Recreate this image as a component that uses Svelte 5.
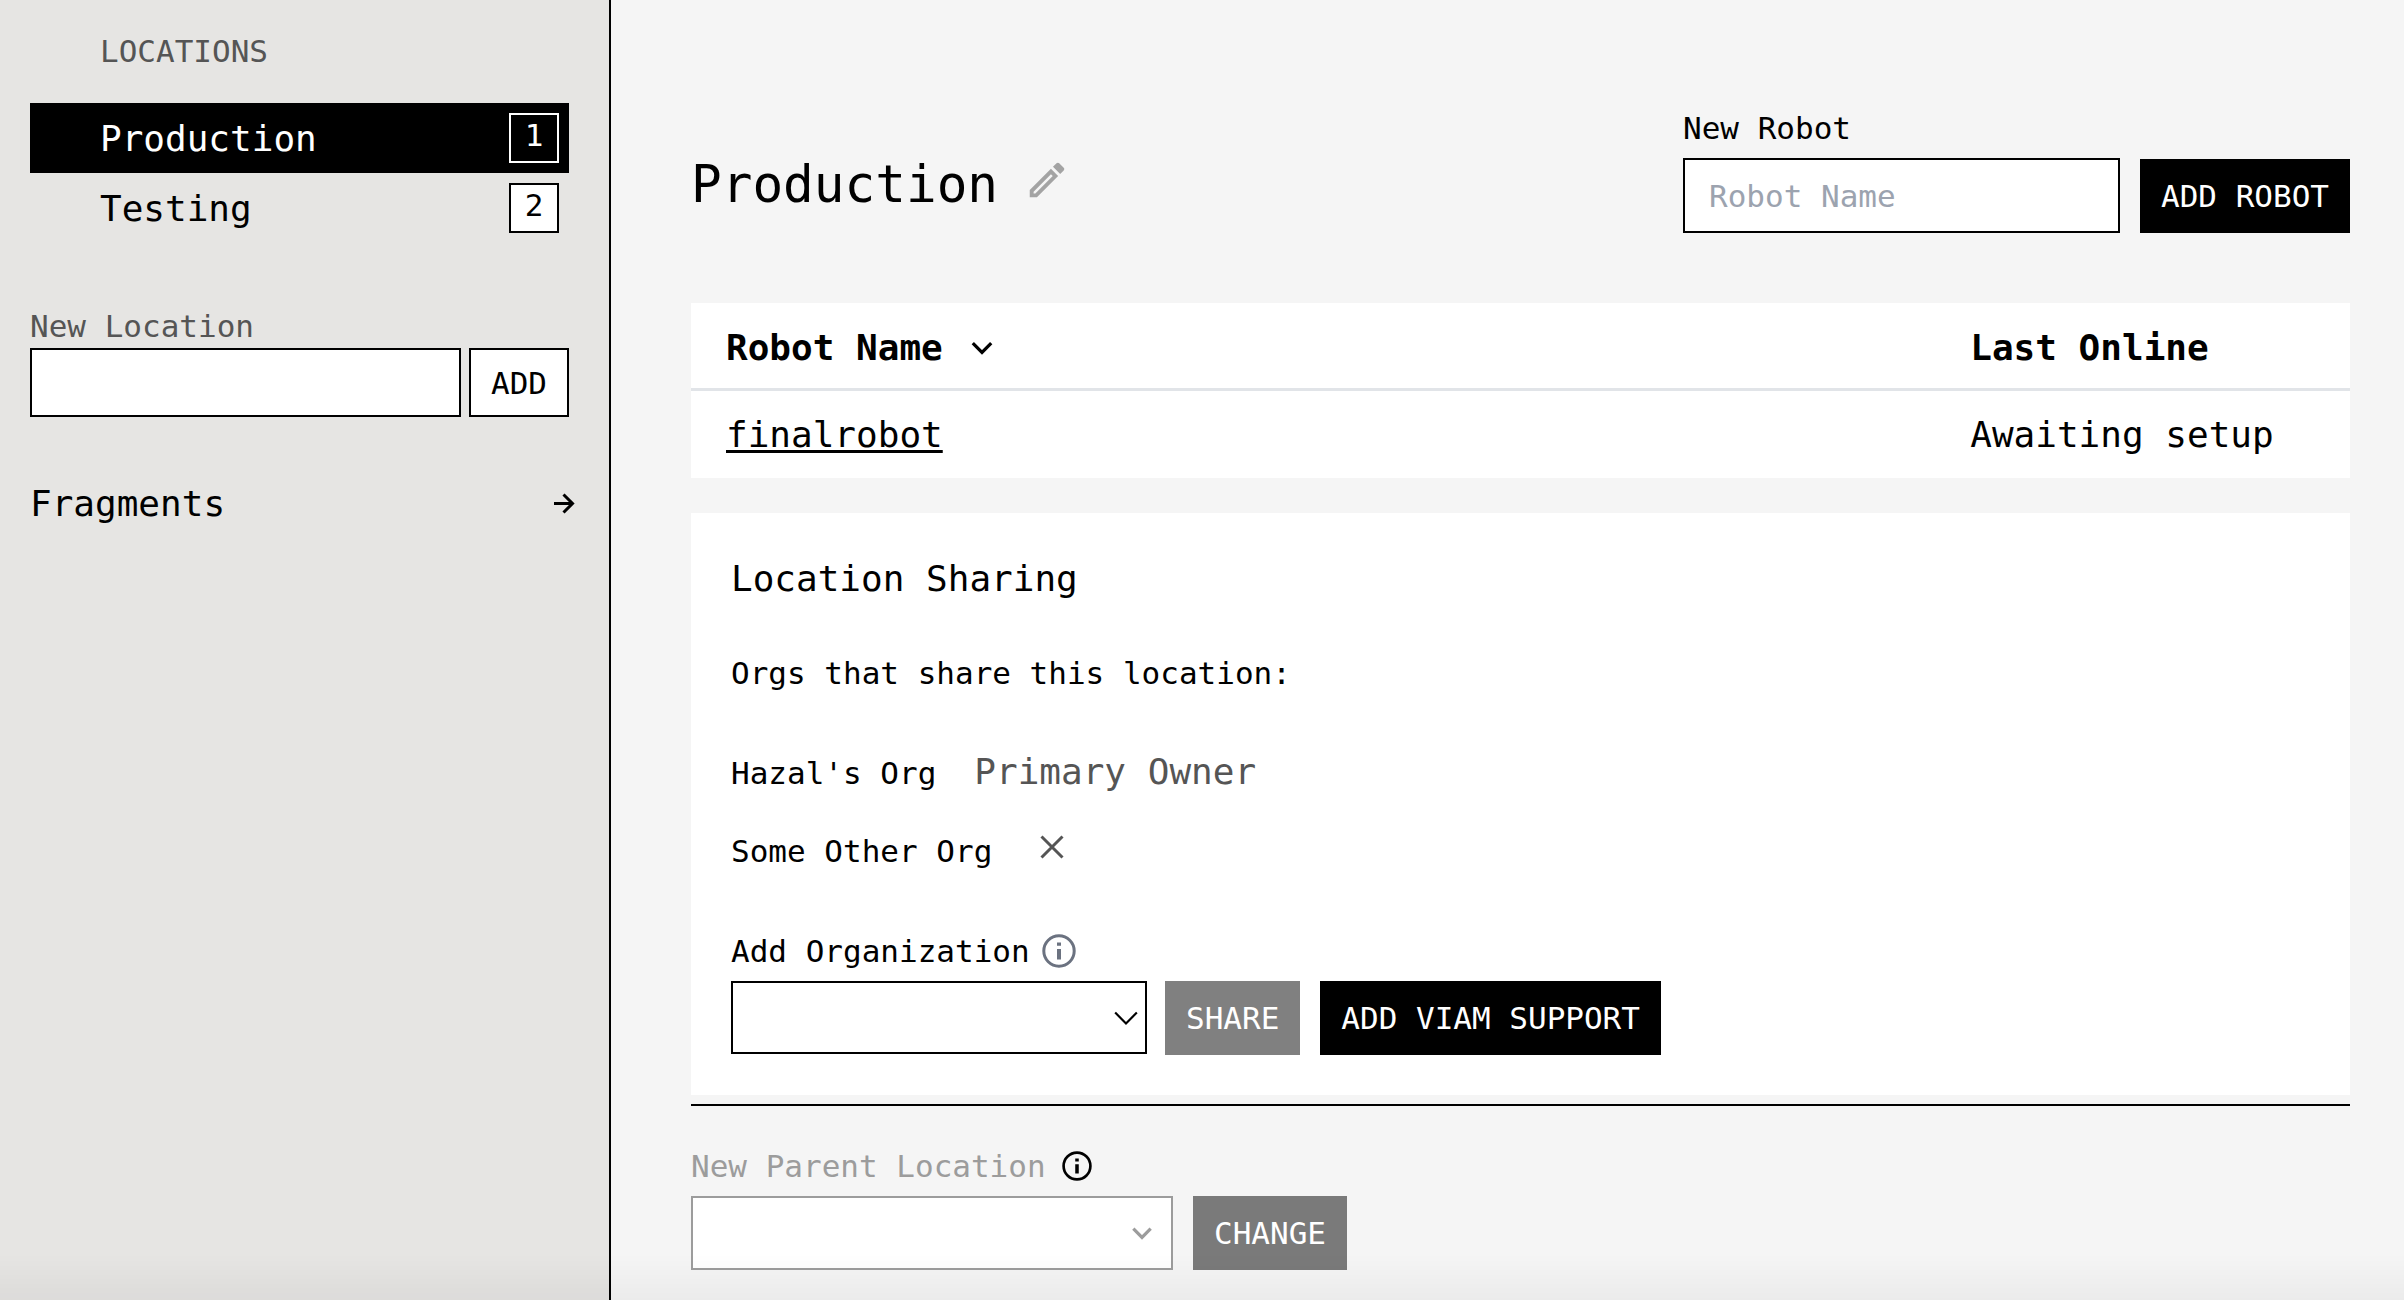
<script>
  const locations = [
    { name: 'Production', count: 1, active: true },
    { name: 'Testing', count: 2, active: false }
  ];
  const robots = [{ name: 'finalrobot', status: 'Awaiting setup' }];
</script>

<div class="page">
  <aside class="sidebar">
    <nav aria-label="Locations">
      <h2 class="nav-title">LOCATIONS</h2>
      <ul class="locations">
        {#each locations as location}
          <li>
            <a class="location" class:active={location.active} href="#{location.name.toLowerCase()}">
              <span>{location.name}</span>
              <span class="badge">{location.count}</span>
            </a>
          </li>
        {/each}
      </ul>
    </nav>

    <form class="new-location">
      <label for="new-location">New Location</label>
      <div class="add-row">
        <input id="new-location" type="text" />
        <button class="button light" type="button">ADD</button>
      </div>
    </form>

    <a class="fragments" href="#fragments">
      <span>Fragments</span>
      <svg class="arrow" viewBox="0 0 30 30" aria-hidden="true">
        <path d="M5 14.5H24M14.5 5.5L23.5 14.5L14.5 23.5" />
      </svg>
    </a>
  </aside>

  <main>
    <header>
      <div class="title">
        <h1>Production</h1>
        <button class="icon-button" type="button" aria-label="Rename location">
          <svg class="pencil" viewBox="0 0 24 24" aria-hidden="true">
            <path d="M14.06,9L15,9.94L5.92,19H5V18.08L14.06,9M17.66,3C17.41,3 17.15,3.1 16.96,3.29L15.13,5.12L18.88,8.87L20.71,7.04C21.1,6.65 21.1,6 20.71,5.63L18.37,3.29C18.17,3.09 17.92,3 17.66,3M14.06,6.19L3,17.25V21H6.75L17.81,9.94L14.06,6.19Z" />
          </svg>
        </button>
      </div>
      <form class="new-robot">
        <div class="field">
          <label for="robot-name">New Robot</label>
          <input id="robot-name" type="text" placeholder="Robot Name" />
        </div>
        <button class="button dark" type="button">ADD ROBOT</button>
      </form>
    </header>

    <table>
      <thead>
        <tr>
          <th class="name" scope="col">
            <span class="sort">
              Robot Name
              <svg class="sort-icon" viewBox="0 0 24 24" aria-hidden="true"><path d="M3.5 7.5L12 16L20.5 7.5" /></svg>
            </span>
          </th>
          <th scope="col">Last Online</th>
        </tr>
      </thead>
      <tbody>
        {#each robots as robot}
          <tr>
            <td><a href="#{robot.name}">{robot.name}</a></td>
            <td>{robot.status}</td>
          </tr>
        {/each}
      </tbody>
    </table>

    <section class="card">
      <h2>Location Sharing</h2>
      <p class="intro">Orgs that share this location:</p>
      <div class="org owner-row">
        <span>Hazal's Org</span>
        <span class="owner">Primary Owner</span>
      </div>
      <div class="org">
        <span>Some Other Org</span>
        <button class="icon-button remove" type="button" aria-label="Remove Some Other Org">
          <svg class="cross" viewBox="0 0 24 24" aria-hidden="true"><path d="M1.5 1.5L22.5 22.5M22.5 1.5L1.5 22.5" /></svg>
        </button>
      </div>

      <div class="label-row">
        <label for="organization">Add Organization</label>
        <svg class="info" viewBox="0 0 34 34" aria-hidden="true">
          <circle cx="17" cy="17" r="15.2" />
          <path d="M17 8.5V11.8M17 15V25.5" />
        </svg>
      </div>
      <div class="controls">
        <div class="select organization">
          <select id="organization"><option></option></select>
          <svg viewBox="0 0 24 24" aria-hidden="true"><path d="M2 7L12 17L22 7" /></svg>
        </div>
        <div class="buttons">
          <button class="button share" type="button">SHARE</button>
          <button class="button dark" type="button">ADD VIAM SUPPORT</button>
        </div>
      </div>
    </section>

    <section class="parent">
      <div class="label-row">
        <label for="parent-location">New Parent Location</label>
        <svg class="info" viewBox="0 0 34 34" aria-hidden="true">
          <circle cx="17" cy="17" r="15.2" />
          <path d="M17 8.5V11.8M17 15V25.5" />
        </svg>
      </div>
      <div class="controls">
        <div class="select parent-select">
          <select id="parent-location" disabled><option></option></select>
          <svg viewBox="0 0 24 24" aria-hidden="true"><path d="M4 8L12 16L20 8" /></svg>
        </div>
        <button class="button change" type="button" disabled>CHANGE</button>
      </div>
    </section>
  </main>
  <div class="fade"></div>
</div>

<style>
  :global(body) {
    margin: 0;
    background: #f5f5f5;
  }

  .page {
    display: flex;
    min-height: 100vh;
    font-family: 'DejaVu Sans Mono', monospace;
    font-size: 31px;
    line-height: 40px;
    color: #000;
  }

  .page :global(*) {
    box-sizing: border-box;
  }

  h1,
  h2,
  p,
  ul {
    margin: 0;
    padding: 0;
    font-weight: 400;
  }

  a {
    color: inherit;
  }

  svg {
    display: block;
    flex: none;
    fill: none;
    stroke: currentColor;
  }

  input,
  select,
  button {
    margin: 0;
    font: inherit;
    border-radius: 0;
  }

  input,
  select {
    width: 100%;
    min-width: 0;
    border: 2px solid #000;
    background: #fff;
    color: #000;
    outline: none;
  }

  .button {
    flex: none;
    height: 74px;
    padding: 0 21px;
    border: 0;
    color: #fff;
    white-space: nowrap;
  }

  .icon-button {
    display: flex;
    padding: 0;
    border: 0;
    background: none;
  }

  .dark {
    background: #000;
  }

  .share {
    background: #808080;
  }

  .change {
    background: #7a7a7a;
  }

  .sidebar {
    flex: none;
    width: 611px;
    padding: 27px 30px;
    border-right: 2px solid #000;
    background: #e6e5e3;
  }

  nav,
  .new-location {
    margin-right: 10px;
  }

  .nav-title {
    padding-left: 70px;
    font-size: 31px;
    line-height: 48px;
    color: #555;
  }

  .locations {
    margin-top: 28px;
    list-style: none;
  }

  .location {
    display: flex;
    align-items: flex-start;
    justify-content: space-between;
    height: 70px;
    padding: 10px 10px 0 70px;
    font-size: 36px;
    line-height: 52px;
    text-decoration: none;
  }

  .active {
    background: #000;
    color: #fff;
  }

  .badge {
    width: 50px;
    height: 50px;
    border: 2px solid #000;
    background: #fff;
    font-size: 31px;
    line-height: 40px;
    text-align: center;
  }

  .active .badge {
    border-color: #fff;
    background: #000;
  }

  .new-location {
    margin-top: 63px;
  }

  .new-location label {
    display: block;
    color: #555;
  }

  .add-row {
    display: flex;
    gap: 8px;
    margin-top: 2px;
  }

  .add-row input,
  .add-row .button {
    height: 69px;
  }

  .light {
    padding: 0 20px;
    border: 2px solid #000;
    background: #fff;
    color: #000;
  }

  .fragments {
    display: flex;
    align-items: center;
    justify-content: space-between;
    margin-top: 63px;
    font-size: 36px;
    line-height: 48px;
    text-decoration: none;
  }

  .arrow {
    width: 30px;
    stroke-width: 3;
  }

  main {
    flex: 1;
    min-width: 0;
    padding: 108px 54px 30px 80px;
  }

  header {
    display: flex;
    align-items: flex-end;
    justify-content: space-between;
    margin-bottom: 70px;
  }

  .title {
    display: flex;
    align-items: flex-start;
    gap: 26px;
    padding-bottom: 16px;
  }

  h1 {
    font-size: 51px;
    line-height: 64px;
  }

  .pencil {
    width: 46px;
    margin-top: 4px;
    fill: #a3a3a3;
    stroke: none;
  }

  .new-robot {
    display: flex;
    align-items: flex-end;
    gap: 20px;
  }

  .field {
    width: 437px;
  }

  .field label {
    display: block;
    margin-bottom: 10px;
  }

  .field input {
    display: block;
    height: 75px;
    padding: 0 24px;
  }

  .field input::placeholder {
    color: #9ca3af;
    opacity: 1;
  }

  table {
    width: 100%;
    table-layout: fixed;
    border-spacing: 0;
    background: #fff;
    font-size: 36px;
    line-height: 48px;
  }

  th {
    padding: 21px 35px 16px;
    border-bottom: 3px solid #e1e4e8;
    font-weight: 700;
    text-align: left;
  }

  .name {
    width: 75%;
  }

  .sort {
    display: flex;
    align-items: center;
    gap: 26px;
  }

  .sort-icon {
    width: 26px;
    stroke-width: 3;
  }

  td {
    padding: 20px 35px 19px;
  }

  td a {
    text-decoration-thickness: 3px;
    text-underline-offset: 3px;
    text-decoration-skip-ink: none;
  }

  .card {
    margin-top: 35px;
    padding: 42px 40px 40px;
    background: #fff;
  }

  .card h2 {
    font-size: 36px;
    line-height: 48px;
  }

  .intro {
    margin-top: 50px;
  }

  .org {
    display: flex;
    align-items: flex-start;
    gap: 40px;
    margin-top: 30px;
    line-height: 48px;
  }

  .owner-row {
    align-items: baseline;
    gap: 38px;
    margin-top: 55px;
  }

  .owner {
    font-size: 36px;
    color: #555;
  }

  .remove {
    align-items: center;
    height: 40px;
    padding-left: 8px;
    color: #555;
  }

  .cross {
    width: 24px;
    stroke-width: 3;
  }

  .label-row {
    display: flex;
    align-items: center;
    gap: 12px;
  }

  .card .label-row {
    margin-top: 56px;
  }

  .info {
    width: 34px;
    color: #6b7280;
    stroke-width: 3;
  }

  .info path {
    stroke-width: 4;
  }

  .controls {
    display: flex;
    align-items: flex-start;
    gap: 18px;
    margin-top: 10px;
  }

  .buttons {
    display: flex;
    gap: 20px;
  }

  .select {
    display: grid;
    align-items: center;
  }

  .select > :global(*) {
    grid-area: 1 / 1;
  }

  .select select {
    appearance: none;
  }

  .select svg {
    width: 26px;
    justify-self: end;
    margin-right: 8px;
    stroke-width: 2;
    pointer-events: none;
  }

  .organization {
    width: 416px;
  }

  .organization select {
    height: 73px;
  }

  .parent {
    margin-top: 9px;
    padding-top: 40px;
    border-top: 2px solid #000;
  }

  .parent .label-row {
    gap: 16px;
  }

  .parent label {
    color: #9c9c9c;
  }

  .parent .info {
    width: 30px;
    color: #000;
  }

  .parent .controls {
    gap: 20px;
  }

  .parent-select {
    width: 482px;
  }

  .parent-select select {
    height: 74px;
    border-color: #9c9c9c;
    opacity: 1;
  }

  .parent-select svg {
    margin-right: 18px;
    color: #9c9c9c;
    stroke-width: 3;
  }

  .fade {
    position: fixed;
    inset: auto 0 0 0;
    height: 46px;
    background: linear-gradient(transparent, rgba(0, 0, 0, 0.04));
    pointer-events: none;
  }
</style>
